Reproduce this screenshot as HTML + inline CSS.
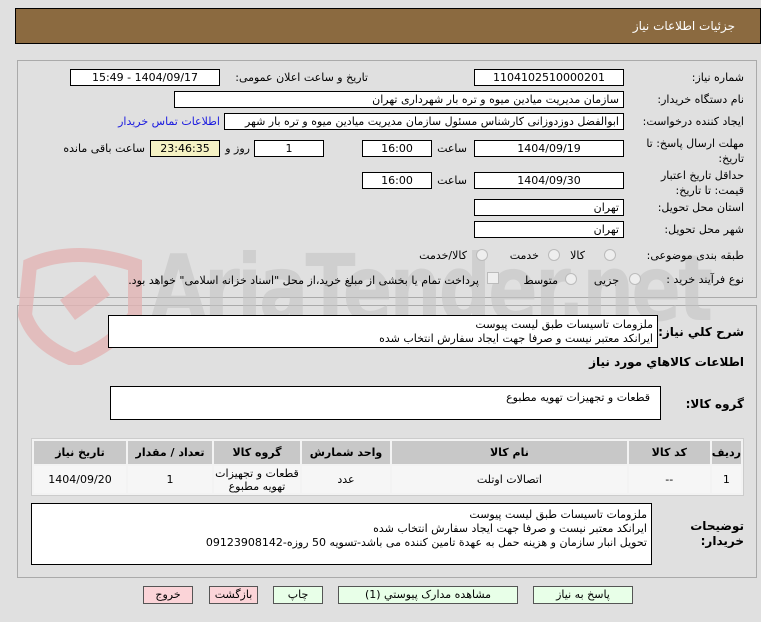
<!DOCTYPE html>
<html><head><meta charset="utf-8"><style>
*{box-sizing:border-box;margin:0;padding:0}
body{width:761px;height:622px;background:#e0e0e0;font-family:"DejaVu Sans","Liberation Sans",sans-serif;font-size:11px;color:#000;position:relative;overflow:hidden}
.a{position:absolute;white-space:nowrap}
.box{position:absolute;background:#fff;border:1px solid #000;direction:rtl;padding:0 4px;line-height:15px;white-space:nowrap;overflow:hidden}
.c{text-align:center}
.l{position:absolute;direction:rtl;white-space:nowrap;text-align:right}
.b{font-weight:bold}
.rad{position:absolute;width:12px;height:12px;border-radius:50%;border:1px solid #bbb;background:#eee}
.btn{position:absolute;height:18px;border:1px solid #555;background:#e8ffe8;text-align:center;line-height:16px;font-size:11px;direction:rtl}
table{position:absolute;border-collapse:separate;border-spacing:2px;background:#f3f3f3;border:1px solid #ccc}
th{background:#c8c8c8;font-weight:bold;height:23px;font-size:11px}
td{background:#f6f6f6;text-align:center;height:27px;font-size:11px;line-height:13px}
</style></head><body>
<div class="a" style="left:15px;top:8px;width:746px;height:36px;background:#8b6a40;border:1px solid #000"></div>
<div class="l" style="right:26px;top:19px;color:#fff;font-size:12px">جزئیات اطلاعات نیاز</div>

<div class="a" style="left:17px;top:60px;width:740px;height:238px;border:1px solid #aaa"></div>
<div class="a" style="left:17px;top:305px;width:740px;height:273px;border:1px solid #aaa"></div>

<!-- watermark -->
<div class="a" style="left:150px;top:235px;font-size:92px;font-weight:bold;color:#c4c4c4;opacity:.6;letter-spacing:-4px;transform:scaleX(.8);transform-origin:left">AriaTender.net</div>
<svg class="a" style="left:15px;top:245px" width="130" height="120"><path d="M15 20 Q60 0 120 20 L120 70 Q100 100 60 115 Q20 100 10 70 Z" fill="none" stroke="#e2b4b4" stroke-width="14" opacity=".8"/><path d="M45 55 L80 30 L95 50 L60 75 Z" fill="#e2b4b4" opacity=".8"/></svg>

<div class="l" style="right:17px;top:71px">شماره نیاز:</div>
<div class="box c" style="left:474px;top:69px;width:150px;height:17px">1104102510000201</div>
<div class="l" style="right:393px;top:71px">تاریخ و ساعت اعلان عمومی:</div>
<div class="box c" style="left:70px;top:69px;width:150px;height:17px">1404/09/17 - 15:49</div>

<div class="l" style="right:17px;top:93px">نام دستگاه خریدار:</div>
<div class="box" style="left:174px;top:91px;width:450px;height:17px">سازمان مدیریت میادین میوه و تره بار شهرداری تهران</div>

<div class="l" style="right:17px;top:115px">ایجاد کننده درخواست:</div>
<div class="box" style="left:224px;top:113px;width:400px;height:17px">ابوالفضل دوزدوزانی کارشناس مسئول سازمان مدیریت میادین میوه و تره بار شهر</div>
<div class="l" style="right:541px;top:115px;color:#1a1adf">اطلاعات تماس خریدار</div>

<div class="l" style="right:17px;top:136px;line-height:15px">مهلت ارسال پاسخ: تا<br>تاریخ:</div>
<div class="box c" style="left:474px;top:140px;width:150px;height:17px">1404/09/19</div>
<div class="l" style="right:294px;top:142px">ساعت</div>
<div class="box c" style="left:362px;top:140px;width:70px;height:17px">16:00</div>
<div class="box c" style="left:254px;top:140px;width:70px;height:17px">1</div>
<div class="l" style="right:511px;top:142px">روز و</div>
<div class="box c" style="left:150px;top:140px;width:70px;height:17px;background:#f5f2c4">23:46:35</div>
<div class="l" style="right:616px;top:142px">ساعت باقی مانده</div>

<div class="l" style="right:17px;top:168px;line-height:15px">حداقل تاریخ اعتبار<br>قیمت: تا تاریخ:</div>
<div class="box c" style="left:474px;top:172px;width:150px;height:17px">1404/09/30</div>
<div class="l" style="right:294px;top:174px">ساعت</div>
<div class="box c" style="left:362px;top:172px;width:70px;height:17px">16:00</div>

<div class="l" style="right:17px;top:201px">استان محل تحویل:</div>
<div class="box" style="left:474px;top:199px;width:150px;height:17px">تهران</div>
<div class="l" style="right:17px;top:223px">شهر محل تحویل:</div>
<div class="box" style="left:474px;top:221px;width:150px;height:17px">تهران</div>

<div class="l" style="right:17px;top:249px">طبقه بندی موضوعی:</div>
<div class="rad" style="left:604px;top:249px"></div><div class="l" style="right:176px;top:249px">کالا</div>
<div class="rad" style="left:548px;top:249px"></div><div class="l" style="right:222px;top:249px">خدمت</div>
<div class="rad" style="left:476px;top:249px"></div><div class="l" style="right:294px;top:249px">کالا/خدمت</div>

<div class="l" style="right:17px;top:273px">نوع فرآیند خرید :</div>
<div class="rad" style="left:629px;top:273px"></div><div class="l" style="right:142px;top:274px">جزیی</div>
<div class="rad" style="left:565px;top:273px"></div><div class="l" style="right:203px;top:274px">متوسط</div>
<div class="a" style="left:487px;top:272px;width:12px;height:12px;border:1px solid #bbb;background:#eee"></div>
<div class="l" style="right:282px;top:274px">پرداخت تمام یا بخشی از مبلغ خرید،از محل "اسناد خزانه اسلامی" خواهد بود.</div>

<div class="l b" style="right:17px;top:325px;font-size:12px">شرح کلي نیاز:</div>
<div class="box" style="left:108px;top:315px;width:550px;height:33px;line-height:14px;padding-top:2px">ملزومات تاسیسات طبق لیست پیوست<br>ایرانکد معتبر نیست و صرفا جهت ایجاد سفارش انتخاب شده</div>
<div class="l b" style="right:17px;top:355px;font-size:12px">اطلاعات کالاهاي مورد نياز</div>

<div class="l b" style="right:17px;top:397px;font-size:12px">گروه کالا:</div>
<div class="box" style="left:110px;top:386px;width:551px;height:34px;padding:3px 10px">قطعات و تجهیزات تهویه مطبوع</div>

<table style="left:31px;top:438px;width:713px;direction:rtl">
<tr><th style="width:26px">ردیف</th><th style="width:81px">کد کالا</th><th>نام کالا</th><th style="width:88px">واحد شمارش</th><th style="width:86px">گروه کالا</th><th style="width:84px">تعداد / مقدار</th><th style="width:92px">تاریخ نیاز</th></tr>
<tr><td>1</td><td>--</td><td>اتصالات اوتلت</td><td>عدد</td><td>قطعات و تجهیزات<br>تهویه مطبوع</td><td>1</td><td>1404/09/20</td></tr>
</table>

<div class="l b" style="right:17px;top:519px;font-size:12px;line-height:15px">توضیحات<br>خریدار:</div>
<div class="box" style="left:31px;top:503px;width:621px;height:62px;line-height:14px;padding-top:4px">ملزومات تاسیسات طبق لیست پیوست<br>ایرانکد معتبر نیست و صرفا جهت ایجاد سفارش انتخاب شده<br>تحویل انبار سازمان و هزینه حمل به عهدة تامین کننده می باشد-تسویه 50 روزه-09123908142</div>

<div class="btn" style="left:533px;top:586px;width:100px">پاسخ به نیاز</div>
<div class="btn" style="left:338px;top:586px;width:180px">مشاهده مدارک پیوستي (1)</div>
<div class="btn" style="left:273px;top:586px;width:50px">چاپ</div>
<div class="btn" style="left:209px;top:586px;width:49px;background:#fbd4d8">بازگشت</div>
<div class="btn" style="left:143px;top:586px;width:50px;background:#fbd4d8">خروج</div>
</body></html>
